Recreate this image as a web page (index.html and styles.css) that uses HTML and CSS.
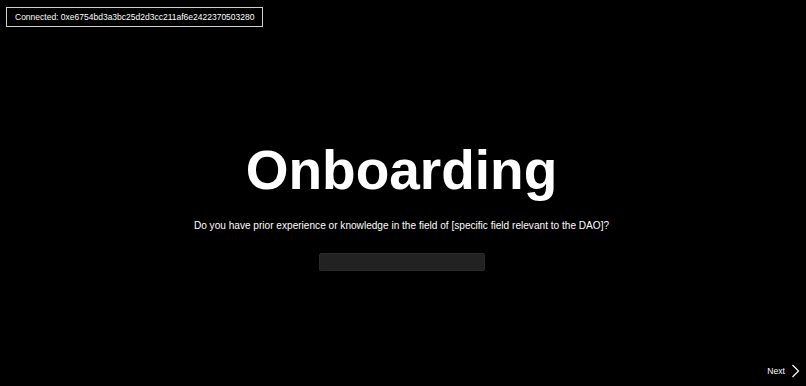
FILE: index.html
```html
<!DOCTYPE html>
<html lang="en">
<head>
  <meta charset="UTF-8" />
  <meta name="viewport" content="width=device-width, initial-scale=1.0"/>
  <title>Onboarding</title>
  <link rel="stylesheet" href="styles.css">
</head>
<body>
  <div class="page">
    <div class="top-bar">
      <div class="wallet">Connected: 0xe6754bd3a3bc25d2d3cc211af6e2422370503280</div>
    </div>
    <div class="content">
      <h1 class="title">Onboarding</h1>
      <p class="question">Do you have prior experience or knowledge in the field of [specific field relevant to the DAO]?</p>
      <input class="answer" type="text" />
    </div>
    <div class="bottom-bar">
      <button class="next-btn">Next
        <svg width="9" height="14" viewBox="0 0 9 14"><path d="M1.5 1 L7.5 7 L1.5 13" fill="none" stroke="#fff" stroke-width="1.2"/></svg>
      </button>
    </div>
  </div>
</body>
</html>
```

FILE: styles.css
```css
* {
  margin: 0;
  padding: 0;
  box-sizing: border-box;
  font-family: "Liberation Sans", Arial, sans-serif;
}

html, body {
  width: 100%;
  height: 100%;
  background: #000;
  color: #fff;
  overflow: hidden;
}

.page {
  display: flex;
  flex-direction: column;
  height: 100vh;
}

.top-bar {
  display: flex;
  padding: 7px 6px 0;
}

.wallet {
  border: 1px solid #d0d0d0;
  font-size: 8.5px;
  line-height: 18px;
  padding: 0 8px;
}

.content {
  flex: 1;
  display: flex;
  flex-direction: column;
  align-items: center;
  padding-top: 113px;
  padding-right: 3px;
}

.title {
  font-size: 55px;
  font-weight: bold;
  line-height: 60px;
}

.question {
  font-size: 10.1px;
  margin-top: 19px;
  line-height: 14px;
}

.answer {
  margin-top: 20px;
  width: 166px;
  height: 18px;
  background: #222;
  border: 1px solid #2a2a2a;
  border-radius: 2px;
  outline: none;
}

.bottom-bar {
  display: flex;
  justify-content: flex-end;
  padding: 0 6px 8px;
}

.next-btn {
  display: flex;
  align-items: center;
  gap: 6px;
  background: none;
  border: none;
  color: #fff;
  font-size: 8.6px;
}
```
